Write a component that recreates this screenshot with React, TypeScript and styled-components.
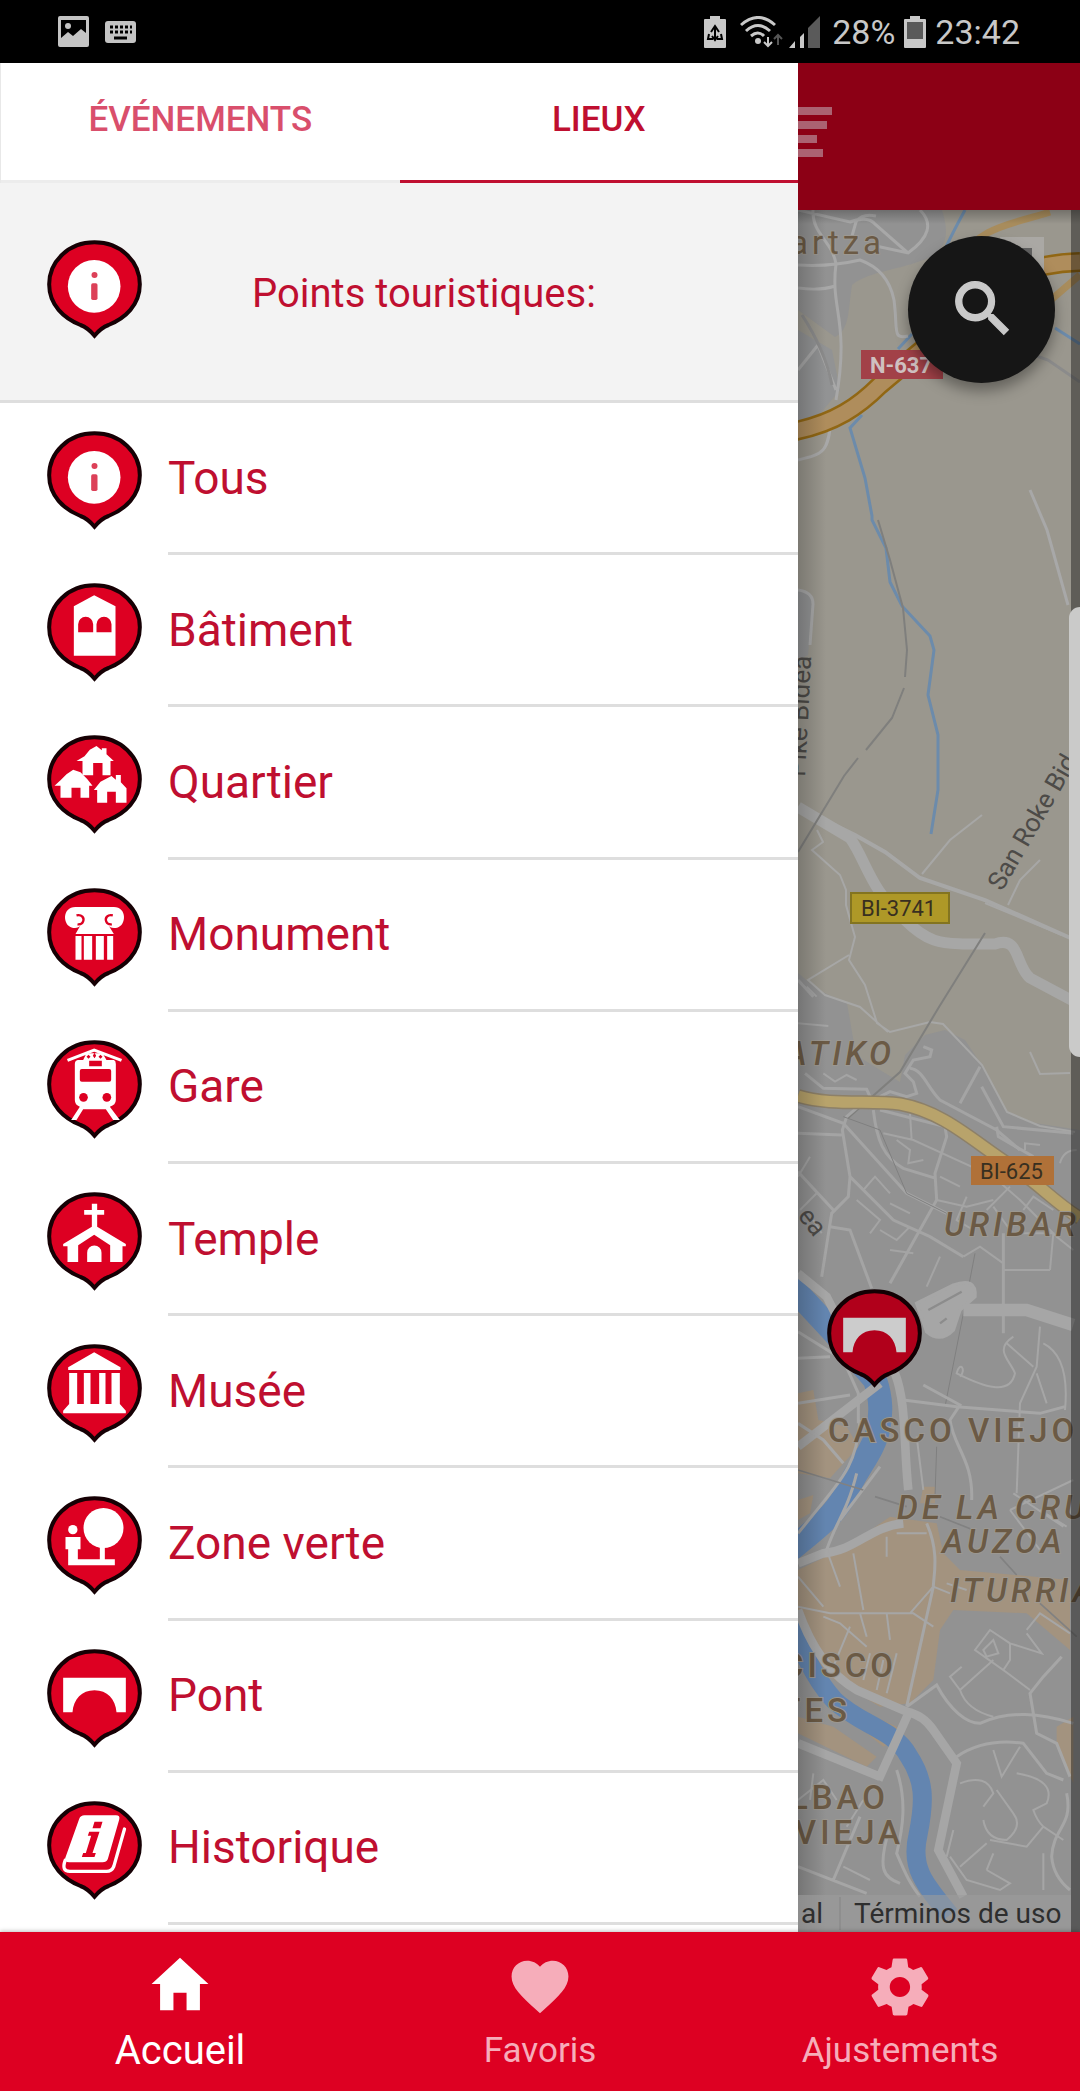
import React, { useState } from "react";
import styled, { createGlobalStyle } from "styled-components";
import { IoMdHeart, IoMdHome, IoMdSearch, IoMdSettings } from "react-icons/io";

const RED = "#dd0022";
const INK = "#bf0f30";
const LINE = "#dedede";

const GlobalStyle = createGlobalStyle`
  *, *::before, *::after { box-sizing: border-box; }
  body { margin: 0; background: #000; font-family: Roboto, "Liberation Sans", sans-serif; }
  button { margin: 0; padding: 0; border: 0; background: none; font: inherit; color: inherit; cursor: pointer; }
  a { color: inherit; text-decoration: none; }
  svg { display: block; flex: none; }
`;

const Screen = styled.div`
  display: flex;
  flex-direction: column;
  min-height: 100vh;
`;

const StatusBar = styled.header`
  display: flex;
  justify-content: space-between;
  align-items: center;
  height: 63px;
  padding: 0 60px 0 58px;
  background: #000;
  color: #c8c8c8;
  font-size: 34px;
`;

const StatusGroup = styled.div<{ $gap: number }>`
  display: flex;
  align-items: center;
  gap: ${(p) => p.$gap}px;
`;

const Stage = styled.div`
  flex: 1;
  display: flex;
  min-height: 0;
`;

const Drawer = styled.aside`
  display: flex;
  flex-direction: column;
  width: 74%;
  max-width: 798px;
  background: #fff;
  color: ${INK};
`;

const Tabs = styled.div`
  display: grid;
  grid-template-columns: 1fr 1fr;
  height: 120px;
  border-left: 1px solid #e8e8e8;
`;

const Tab = styled.button<{ $active: boolean }>`
  padding-bottom: 5px;
  border-bottom: 3px solid ${(p) => (p.$active ? INK : "#ececec")};
  color: ${(p) => (p.$active ? INK : "#d94f6c")};
  font-size: 35px;
  font-weight: 500;
`;

const ListHeader = styled.div`
  display: flex;
  align-items: center;
  height: 220px;
  padding-left: 47px;
  background: #f3f3f3;
  border-bottom: 3px solid ${LINE};
`;

const ListTitle = styled.h1`
  margin: 0;
  padding: 3px 0 0 110px;
  font-size: 40px;
  font-weight: 400;
`;

const PlaceList = styled.ul`
  flex: 1;
  display: grid;
  grid-auto-rows: minmax(140px, 1fr);
  margin: 0;
  padding: 0 0 7px;
  list-style: none;
`;

const PlaceRow = styled.button`
  display: flex;
  gap: 26px;
  width: 100%;
  height: 100%;
  padding-left: 47px;
  text-align: left;
`;

const PinCell = styled.span<{ $raised?: boolean }>`
  display: flex;
  align-items: center;
  padding: ${(p) => (p.$raised ? "0 0 4px" : "3px 0 0")};
`;

const PlaceName = styled.span`
  flex: 1;
  display: flex;
  align-items: center;
  border-bottom: 3px solid ${LINE};
  font-size: 46px;
`;

const Page = styled.main`
  flex: 1;
  display: flex;
  flex-direction: column;
  min-width: 0;
`;

const AppBar = styled.div`
  display: flex;
  align-items: center;
  height: 147px;
  padding-bottom: 9px;
  background: #8c0015;
`;

const MapArea = styled.section`
  position: relative;
  flex: 1;
  overflow: hidden;
  background: #929292;
`;

const MapCanvas = styled.svg`
  position: absolute;
  inset: 0;
  width: 100%;
  height: 100%;
`;

const SearchButton = styled.button`
  position: absolute;
  top: 26px;
  right: 25px;
  display: grid;
  place-items: center;
  width: 147px;
  height: 147px;
  padding-bottom: 4px;
  border-radius: 50%;
  background: #161616;
  color: #c9c9c9;
  box-shadow: 0 8px 14px rgba(0, 0, 0, 0.35);
`;

const MapPin = styled.button`
  position: absolute;
  top: 1079px;
  left: 29px;
  filter: brightness(0.8);
`;

const EdgeHandle = styled.div`
  position: absolute;
  top: 397px;
  right: 0;
  width: 11px;
  height: 450px;
  border-radius: 11px 0 0 11px;
  background: #cacac9;
`;

const Attribution = styled.div`
  position: absolute;
  left: 0;
  right: 9px;
  bottom: 0;
  display: flex;
  align-items: center;
  height: 37px;
  padding-left: 3px;
  background: rgba(156, 156, 156, 0.6);
  color: #2e2e2e;
  font-size: 28px;
`;

const AttributionLink = styled.a`
  padding-left: 13px;
  margin-left: 16px;
  border-left: 2px solid #8e8e8e;
  white-space: nowrap;
`;

const BottomNav = styled.nav`
  position: relative;
  display: grid;
  grid-template-columns: repeat(3, 1fr);
  height: 159px;
  background: ${RED};
  box-shadow: 0 -1px 4px rgba(0, 0, 0, 0.25);
`;

const NavItem = styled.button<{ $active: boolean }>`
  display: flex;
  flex-direction: column;
  align-items: center;
  justify-content: center;
  gap: 8px;
  color: ${(p) => (p.$active ? "#fff" : "#f6adba")};
  font-size: ${(p) => (p.$active ? 40 : 35)}px;
`;

type Glyph =
  | "info" | "building" | "district" | "monument" | "station"
  | "temple" | "museum" | "park" | "bridge" | "history";

const glyphs: Record<Glyph, React.ReactNode> = {
  info: (
    <>
      <circle cx="141" cy="139" r="79" />
      <circle cx="142" cy="105" r="9" fill="#dc4058" />
      <rect x="132" y="130" width="19" height="50" rx="5" fill="#dc4058" />
    </>
  ),
  building: (
    <>
      <path d="M141 37 205 70V218H80V70Z" />
      <path fill={RED} d="M93 148V124a22 22 0 0 1 45 0V148ZM148 148V124a22 22 0 0 1 45 0V148Z" />
    </>
  ),
  district: (
    <>
      <path d="M148 33 164 46V40H178V58L200 78H190V121H166V84H138V121H106V78H88L112 64 128 44Z" />
      <path d="M78 104 100 112 120 132 136 152H126V188H100V158H73V188H40V152H22L40 136 58 118Z" />
      <path d="M193 123 206 134V120H221V142L238 160V203H206V170H180V203H150V165H140L160 140 180 130Z" />
    </>
  ),
  monument: (
    <>
      <path d="M85 57H200C240 57 238 112 210 119C196 122 186 118 184 112L200 138H85L100 112C96 120 84 122 75 119C46 112 44 57 85 57Z" />
      <path fill="none" stroke={RED} strokeWidth="7" d="M88 82c16-4 24 8 20 18c-3 8-10 10-17 9M197 82c-16-4-24 8-20 18c3 8 10 10 17 9" />
      <path d="M85 144H103V215H85ZM110 144H135V215H110ZM146 144H170V215H146ZM180 144H198V215H180Z" />
    </>
  ),
  station: (
    <>
      <path fill="none" stroke="#fff" strokeWidth="9" d="M61 61 141 30 223 61" />
      <path d="M118 40H166L178 60H200Q206 62 206 72V180Q206 195 188 200L218 240H198L176 208H108L88 240H72L98 200Q83 195 83 180V72Q83 62 92 60H108Z" />
      <path fill={RED} d="M126 62H164V79H126ZM104 87H186Q192 87 192 93V119Q192 125 186 125H104Q98 125 98 119V93Q98 87 104 87ZM124 44l6 6-6 6-6-6ZM142 38l5 9-5 8-5-8ZM160 44l6 6-6 6-6-6Z" />
      <circle cx="109" cy="172" r="13" fill={RED} />
      <circle cx="179" cy="172" r="13" fill={RED} />
    </>
  ),
  temple: (
    <>
      <path d="M134 35H150V54H171V68H150V104L236 156V163H226V210H189V160L141 128 93 160V210H61V163H48V156L134 104V68H111V54H134Z" />
      <path d="M120 210V182a21 21 0 0 1 43 0V210Z" />
    </>
  ),
  museum: (
    <path d="M141 25 220 70V78H63V70ZM66 87H90V180H110V87H130V180H156V87H175V180H193V87H218V180L236 200V208H48V200L66 180Z" />
  ),
  park: (
    <>
      <circle cx="169" cy="96" r="60" />
      <circle cx="77" cy="101" r="14" />
      <path d="M158 150H173V190H203V208H63V160H55V123H100V160H92V190H158Z" />
    </>
  ),
  bridge: <path d="M48 86H236V190H208C205 150 180 124 142 124S79 150 76 190H48Z" />,
  history: (
    <>
      <path d="M112 43H206Q220 43 216 56L182 174Q178 184 166 184H66Q52 184 54 172L96 54Q100 43 112 43Z" />
      <path fill="none" stroke="#fff" strokeWidth="10" strokeLinecap="round" d="M54 178Q42 211 68 211H178Q194 211 200 196L232 84" />
      <path fill={RED} d="M142 62H166L160 82H136ZM126 92H157L136 156H146L142 168H104L108 156H116L132 104H122Z" />
    </>
  ),
};

function Pin({ glyph }: { glyph: Glyph }) {
  return (
    <svg width="95" height="99" viewBox="0 0 284 297" fill="#fff" aria-hidden="true">
      <path
        fill={RED}
        stroke="#160004"
        strokeWidth="12"
        d="M142 7C62 7 6 66 6 133C6 195 50 235 100 255Q122 263 142 287Q162 263 184 255C234 235 278 195 278 133C278 66 222 7 142 7Z"
      />
      {glyphs[glyph]}
    </svg>
  );
}

function CityMap() {
  return (
    <MapCanvas viewBox="798 210 282 1722" preserveAspectRatio="xMinYMin slice" role="img" aria-label="Bilbao">
      <defs>
        <linearGradient id="edge">
          <stop offset="0" stopOpacity=".2" />
          <stop offset="1" stopOpacity="0" />
        </linearGradient>
        <linearGradient id="barShade" x2="0" y2="1">
          <stop offset="0" stopOpacity=".25" />
          <stop offset="1" stopOpacity="0" />
        </linearGradient>
      </defs>
      <rect x="798" y="210" width="282" height="1722" fill="#929292" />

      {/* hills and parkland */}
      <path
        fill="#9a978e"
        d="M942 210C950 235 945 245 935 255C905 270 870 270 852 285C848 310 850 330 835 337L798 310V973L818 990 847 1003 856 1055 880 1070 900 1082 905 1055 925 1035 945 1030 965 1040 985 1070 1007 1112 1035 1123 1080 1130V210Z"
      />
      <path fill="#929394" d="M798 330 832 350 840 390 798 440ZM798 590Q812 590 812 605L808 655 798 660Z" />

      {/* commercial quarters */}
      <g fill="#a3937f" transform="translate(780 1260) scale(.33333)">
        <path d="M54 400 100 390 115 480 200 500 235 560 150 655 54 640ZM54 720 100 705 90 760 54 780ZM430 680H465V730H420Z" />
        <path d="M54 930 200 860 330 770 470 790 490 880 540 930 870 960V1170L740 1060 520 1050 480 1110 460 1260 390 1330 300 1340 130 1240 54 1080Z" />
        <path d="M200 1330 350 1400 370 1430 310 1460 160 1340ZM54 1370 160 1400 290 1490 260 1520 54 1420ZM830 1400 880 1370V1570L830 1460Z" />
      </g>

      {/* streams */}
      <g fill="none" stroke="#6c8bab" strokeWidth="3">
        <path d="M965 210Q953 232 946 247M1055 328 1080 344M898 349 912 334M862 415 850 428 865 478 872 516 872 520 886 548 890 582 902 606 930 636 934 650 928 695 938 735V790L931 834" />
      </g>

      {/* northern streets */}
      <g fill="none" stroke="#a8a8a8" strokeWidth="3">
        <path d="M798 460C824 454 828 452 831 420M798 265Q830 267 860 260Q888 270 894 300C898 330 892 340 908 336M836 264C830 310 850 320 836 400M813 210C812 235 832 240 836 264M920 210Q940 230 908 253L876 246M798 210 850 222Q868 215 876 225L908 253M852 236 856 222Q862 213 876 216M798 288Q820 291 835 286M798 370 818 345 836 390M1030 490 1047 530 1068 605M798 590Q813 592 813 604L810 645" />
        <path stroke="#8b8b8b" d="M802 315Q825 350 832 385M1020 350 1048 360 1080 382" />
      </g>

      {/* roads across the hillside */}
      <g fill="none" stroke="#a7a7a6" strokeWidth="2">
        <path d="M817 830 823 842 812 850 840 875 846 890V905L855 937 849 960 865 985 877 1023 890 1032 930 1022 943 1024 982 1065 1007 1112 1040 1126 1075 1132M849 955 808 980 825 995 860 1007 888 1032M922 874 950 840 982 815M1008 905 1020 880 1040 860M985 903 1062 935M1030 1052 1040 1074 1070 1073" />
        <path strokeWidth="4" d="M798 807 855 835 885 852 920 878 985 900 1075 940" />
        <path strokeWidth="11" d="M798 807 850 838C866 860 870 890 905 920C930 945 945 943 965 944H995C1020 935 1015 965 1030 978L1075 1002" />
      </g>
      <g fill="none" stroke="#7f7f7d" strokeWidth="2">
        <path d="M878 520 890 560 903 608 907 650 905 677M904 688 892 718 866 750M858 758 844 776 798 852M985 933 939 1007 900 1072 848 1118" />
      </g>

      {/* city street grid */}
      <g fill="none" stroke="#a4a4a4" strokeWidth="3" transform="translate(780 900) scale(.33333)">
        <g strokeWidth="9">
          <path d="M75 520 130 565 260 568 270 590 200 650 187 690 210 830 205 890 155 940 125 1130M300 590 330 575 380 590 410 580 400 545 375 520 400 480 450 470 455 450 430 440M390 505C430 510 440 560 480 600L650 690 720 750M605 560 670 680 880 700M280 630C290 720 310 770 370 805L468 835M495 680 500 710 465 820 470 900 330 1150M300 630 495 680M54 815 160 930M54 700 185 705M54 620 190 670 380 880 500 940M150 980 210 990 275 1165M210 830 340 960 450 1010 550 1070" />
          <path d="M670 1000V1300M650 680 655 710 760 770M54 240 100 290M600 500 540 610" />
        </g>
        <path strokeWidth="6" d="M310 700 400 720 640 830M350 720 390 750 385 790 430 780M390 640 395 720M230 900 300 960 270 1000M250 870 285 830 330 880M300 990 350 1020 390 980M330 910 390 940M330 1050 400 1060M440 1160 480 1070M470 900 560 920 640 900M560 890 530 960 580 990M640 830 720 900 830 1010 880 1050M620 930 690 860M640 920 690 990M700 1000H820L810 1110M670 1110H810M730 930 760 890 820 930M840 790Q850 750 890 750M735 750V730L780 735M54 830 90 770M60 930 110 880M100 960 125 1000M54 370 145 378M80 260 110 290M130 520 165 545 200 525 230 540M480 830 540 860M550 1070 600 1040 670 1090" />
        <path stroke="#808080" d="M190 650 300 690 380 880 500 940M585 1060 560 1190 495 1520M470 1640 465 1790" />
      </g>

      {/* main yellow road */}
      <path fill="none" stroke="#8d8068" strokeWidth="14" d="M798 1096C830 1106 870 1100 900 1104C945 1112 975 1143 1010 1165C1035 1180 1055 1203 1080 1218" />
      <path fill="none" stroke="#b8a36b" strokeWidth="11" d="M798 1096C830 1106 870 1100 900 1104C945 1112 975 1143 1010 1165C1035 1180 1055 1203 1080 1218" />

      {/* river */}
      <g fill="none" stroke="#6385b0">
        <path strokeWidth="24" d="M790 1285 830 1328 875 1380C882 1400 881 1415 878 1430C874 1450 856 1470 846 1493C835 1515 815 1530 790 1550" />
        <path strokeWidth="19" d="M790 1620C806 1662 820 1685 834 1700C860 1725 895 1730 908 1755C925 1780 925 1800 918 1835C910 1868 925 1885 950 1915" />
      </g>

      {/* old town and southern streets */}
      <g fill="none" stroke="#a6a6a6" transform="translate(780 1260) scale(.33333)">
        <path strokeWidth="38" d="M550 150H740L880 195" />
        <path fill="#a6a6a6" strokeWidth="10" d="M410 130 520 75Q590 50 585 110L540 150 520 210Q480 250 440 215Z" />
        <path stroke="#8c8c8c" strokeWidth="7" d="M445 150 545 95M480 190 500 175" />
        <path strokeWidth="26" d="M54 40 140 110 200 230M54 560 300 370M345 340C380 430 370 550 385 690M54 910 130 880C230 870 270 800 370 790M54 1050C100 1180 160 1250 230 1290L380 1355Q430 1365 460 1410L530 1510 475 1770 550 1910M390 1350 295 1560M54 1450 300 1550" />
        <path strokeWidth="9" d="M54 215 190 300 235 400V490M54 295 150 290M54 430 210 405M54 490 130 540 190 610M240 480C230 620 190 650 54 820M230 640C200 760 170 780 140 870M300 620 180 780M370 420 530 440 780 460 855 440M430 375 540 435 510 480C520 560 580 600 575 720M440 790C480 880 460 950 460 980L380 1340M380 1340 470 1275 C510 1350 560 1390 600 1390C690 1350 780 1360 880 1390M530 1490C590 1450 660 1440 730 1450L800 1540 850 1560M350 1530C380 1620 370 1700 350 1780C380 1850 390 1870 420 1910M330 1700C290 1830 310 1850 360 1870M160 1860 240 1670M54 1820 260 1900M870 1550 830 1450 770 1420 750 1300 790 1250 845 1190M860 1600C880 1700 820 1700 815 1790Q820 1850 870 1890" />
        <path strokeWidth="6" d="M780 200 770 320 720 430 710 700M680 250 760 320M700 230C640 270 690 300 705 340C690 410 610 380 530 340C540 300 560 330 540 350M770 340 800 430M790 250Q870 290 855 450M410 530 430 690M690 750 880 660M690 750 780 870M700 700 850 800M780 750 860 800M140 870 180 980M220 880 250 1050M54 1040 150 1060 400 1060 460 1100M54 950 130 1040M130 1070 180 1090 260 1160M210 1100 160 1220M320 830V890M350 820H440M240 1060 260 1130M320 1060 330 1140M460 980 510 1000M460 980 390 1060M500 970 560 990M270 1180 250 1260M310 1200 290 1290M350 1180 320 1300" />
        <path strokeWidth="6" d="M740 1110 780 1060 870 1120M740 1120 785 1180 690 1150M690 1150V1200L670 1230 585 1170 630 1110 690 1150M610 1170 640 1140 655 1180 620 1190ZM670 1230 750 1290M640 1200 540 1290 510 1250 545 1220M540 1290Q560 1350 640 1370M640 1470 665 1550 720 1460M540 1570Q620 1540 640 1600L610 1640M710 1540Q830 1560 800 1630L760 1650Q770 1680 790 1700M790 1700 850 1740M790 1700 740 1760 630 1740M610 1680Q620 1740 680 1740Q730 1700 700 1660L650 1590M540 1820 620 1750M620 1830 690 1870 660 1890 560 1860 510 1790M620 1830 640 1780M790 1780V1890M500 1790 520 1710M54 1620 130 1560 170 1620M100 1540 90 1620M200 1700 250 1620M190 1820 270 1860" />
        <path stroke="#818181" strokeWidth="5" d="M54 630 250 690M285 710 380 740M480 770 580 810M660 890 710 945M780 1030 890 1130" />
      </g>

      {/* motorway */}
      <g fill="none">
        <path stroke="#a88c5c" strokeWidth="7" d="M955 265C980 225 1010 225 1050 212M1045 305 1080 275" />
        <path stroke="#916714" strokeWidth="20" d="M790 432C835 424 860 405 880 385L930 343 1000 282Q1035 263 1080 262" />
        <path stroke="#af8d5c" strokeWidth="15" d="M790 432C835 424 860 405 880 385L930 343 1000 282Q1035 263 1080 262" />
      </g>
      <rect x="1000" y="237" width="44" height="44" fill="#aaa8a4" />
      <rect x="1022" y="248" width="10" height="10" fill="#626262" />

      {/* road shields */}
      <rect x="861" y="350" width="82" height="29" fill="#a24148" />
      <rect x="851" y="893" width="98" height="30" fill="#ae9827" stroke="#837420" strokeWidth="2" />
      <rect x="971" y="1156" width="83" height="29" fill="#b07138" />
      <g fontSize="22" fill="#382f20" stroke="none">
        <text x="870" y="373" fill="#cfc0c0" fontWeight="700">N-637</text>
        <text x="861" y="916">BI-3741</text>
        <text x="980" y="1179">BI-625</text>
      </g>

      {/* street names */}
      <g fontSize="26" fill="#4d4b48">
        <text transform="translate(1002 892) rotate(-60)">San Roke Bid</text>
        <text transform="translate(805 777) rotate(-87)">Pike Bidea</text>
        <text transform="translate(797 1216) rotate(52)">ea</text>
      </g>

      {/* neighbourhoods */}
      <g fontSize="33" fontWeight="500" letterSpacing="4" fill="#6b5a45" stroke="#9c9891" strokeWidth="2" paintOrder="stroke">
        <text x="885" y="254" textAnchor="end" fontWeight="400">artza</text>
        <text x="828" y="1442">CASCO VIEJO</text>
        <text x="897" y="1677" textAnchor="end">CISCO</text>
        <text x="851" y="1722" textAnchor="end">TES</text>
        <text x="889" y="1809" textAnchor="end">LBAO</text>
        <text x="904" y="1844" textAnchor="end">VIEJA</text>
        <g fontStyle="italic">
          <text x="895" y="1065" textAnchor="end">ATIKO</text>
          <text x="944" y="1236">URIBAR</text>
          <text x="897" y="1519">DE LA CRU</text>
          <text x="942" y="1553">AUZOA</text>
          <text x="950" y="1602">ITURRIA</text>
        </g>
      </g>

      <rect x="1071" y="210" width="60" height="1722" fill="#000" opacity=".38" />
      <rect x="798" y="210" width="28" height="1722" fill="url(#edge)" />
      <rect x="798" y="210" width="282" height="14" fill="url(#barShade)" />
    </MapCanvas>
  );
}

const PictureIcon = () => (
  <svg width="31" height="31" viewBox="0 0 31 31" fill="#c4c4c4" aria-hidden="true">
    <path fillRule="evenodd" d="M2 0H29Q31 0 31 2V29Q31 31 29 31H2Q0 31 0 29V2Q0 0 2 0ZM3 4V22L10 16 15 20 23 13 28 17V4Z" />
    <circle cx="10" cy="10" r="3" />
  </svg>
);

const KeyboardIcon = () => (
  <svg width="31" height="22" viewBox="0 0 31 22" aria-hidden="true">
    <rect width="31" height="22" rx="3" fill="#c4c4c4" />
    <path stroke="#000" strokeWidth="3" strokeDasharray="3 2" d="M5 6H27M5 11H27" />
    <path stroke="#000" strokeWidth="3" d="M9 17H22" />
  </svg>
);

const SaverIcon = () => (
  <svg width="22" height="32" viewBox="0 0 22 32" aria-hidden="true">
    <path fill="#c8c8c8" d="M6 0H16V3H21Q22 3 22 4V31Q22 32 21 32H1Q0 32 0 31V4Q0 3 1 3H6Z" />
    <g fill="none" stroke="#000" strokeWidth="2">
      <path d="M7 16 11 10 15 16M5 18 4 23H9M17 18 18 23H13M11 12V24" />
      <path d="M8 20 11 24 14 20" />
    </g>
  </svg>
);

const SignalIcon = () => (
  <svg width="88" height="32" viewBox="-6 0 88 32" aria-hidden="true">
    <g fill="none" stroke="#c8c8c8" strokeWidth="3">
      <path d="M0 9Q17-6 34 9M5 15Q17 4 29 15M10 20Q17 14 23 20" />
      <path strokeWidth="2" d="M27 21V30M23 26 27 30 31 26" />
      <path strokeWidth="2" stroke="#555" d="M37 29V19M33 23 37 19 41 23" />
    </g>
    <circle cx="17" cy="25" r="3" fill="#c8c8c8" />
    <path fill="#c8c8c8" d="M48 32 54 25V32ZM59 21 63 17V32H59Z" />
    <path fill="#5a5a5a" d="M67 12 79 0V32H67Z" />
  </svg>
);

const BatteryIcon = () => (
  <svg width="22" height="32" viewBox="0 0 22 32" aria-hidden="true">
    <path fill="#c8c8c8" d="M6 0H16V3H21Q22 3 22 4V31Q22 32 21 32H1Q0 32 0 31V4Q0 3 1 3H6Z" />
    <path fill="#5a5a5a" d="M3 6H19V23H3Z" />
  </svg>
);

const places: { name: string; glyph: Glyph }[] = [
  { name: "Tous", glyph: "info" },
  { name: "Bâtiment", glyph: "building" },
  { name: "Quartier", glyph: "district" },
  { name: "Monument", glyph: "monument" },
  { name: "Gare", glyph: "station" },
  { name: "Temple", glyph: "temple" },
  { name: "Musée", glyph: "museum" },
  { name: "Zone verte", glyph: "park" },
  { name: "Pont", glyph: "bridge" },
  { name: "Historique", glyph: "history" },
];

const sections = [
  { name: "Accueil", Icon: IoMdHome },
  { name: "Favoris", Icon: IoMdHeart },
  { name: "Ajustements", Icon: IoMdSettings },
];

export default function App() {
  const [tab, setTab] = useState("LIEUX");
  const [section, setSection] = useState("Accueil");

  return (
    <Screen>
      <GlobalStyle />
      <StatusBar>
        <StatusGroup $gap={16}>
          <PictureIcon />
          <KeyboardIcon />
        </StatusGroup>
        <StatusGroup $gap={9}>
          <SaverIcon />
          <SignalIcon />
          <span>28%</span>
          <BatteryIcon />
          <span>23:42</span>
        </StatusGroup>
      </StatusBar>

      <Stage>
        <Drawer>
          <Tabs role="tablist">
            {["ÉVÉNEMENTS", "LIEUX"].map((name) => (
              <Tab key={name} role="tab" aria-selected={tab === name} $active={tab === name} onClick={() => setTab(name)}>
                {name}
              </Tab>
            ))}
          </Tabs>
          <ListHeader>
            <PinCell $raised>
              <Pin glyph="info" />
            </PinCell>
            <ListTitle>Points touristiques:</ListTitle>
          </ListHeader>
          <PlaceList>
            {places.map((place) => (
              <li key={place.name}>
                <PlaceRow>
                  <PinCell>
                    <Pin glyph={place.glyph} />
                  </PinCell>
                  <PlaceName>{place.name}</PlaceName>
                </PlaceRow>
              </li>
            ))}
          </PlaceList>
        </Drawer>

        <Page>
          <AppBar>
            <svg width="34" height="50" viewBox="0 0 34 50" fill="#ab6271" aria-hidden="true">
              <path d="M0 0H34V8H0ZM0 14H29V22H0ZM0 28H19V36H0ZM0 42H25V50H0Z" />
            </svg>
          </AppBar>
          <MapArea>
            <CityMap />
            <MapPin aria-label="Pont">
              <Pin glyph="bridge" />
            </MapPin>
            <Attribution>
              <span>al</span>
              <AttributionLink href="#terms">Términos de uso</AttributionLink>
            </Attribution>
            <SearchButton aria-label="Rechercher">
              <IoMdSearch size={70} stroke="currentColor" strokeWidth={10} />
            </SearchButton>
            <EdgeHandle />
          </MapArea>
        </Page>
      </Stage>

      <BottomNav>
        {sections.map(({ name, Icon }) => (
          <NavItem key={name} $active={section === name} onClick={() => setSection(name)}>
            <Icon size={70} />
            <span>{name}</span>
          </NavItem>
        ))}
      </BottomNav>
    </Screen>
  );
}
